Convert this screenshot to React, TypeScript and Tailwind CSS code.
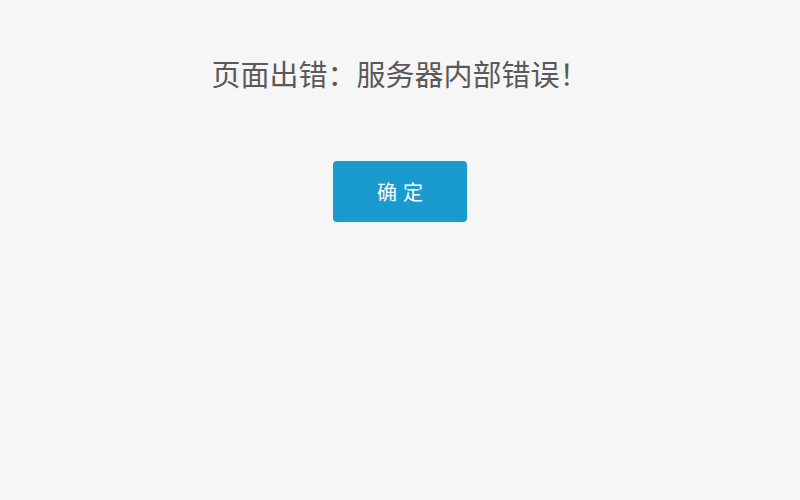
import React from 'react'

export default function App() {
  return (
    <div
      className="min-h-[500px] w-full bg-[#f6f6f6] flex flex-col items-center"
      style={{ fontFamily: '"Noto Sans CJK SC", "Noto Sans", sans-serif' }}
    >
      <h1 className="mt-[54px] text-[29px] leading-[38px] font-normal text-[#595959]">
        页面出错：服务器内部错误！
      </h1>
      <button className="mt-[69px] w-[134px] h-[61px] rounded-[4px] bg-[#1a9bd0] text-white text-[20px] tracking-[6px] pl-[6px]">
        确定
      </button>
    </div>
  )
}
